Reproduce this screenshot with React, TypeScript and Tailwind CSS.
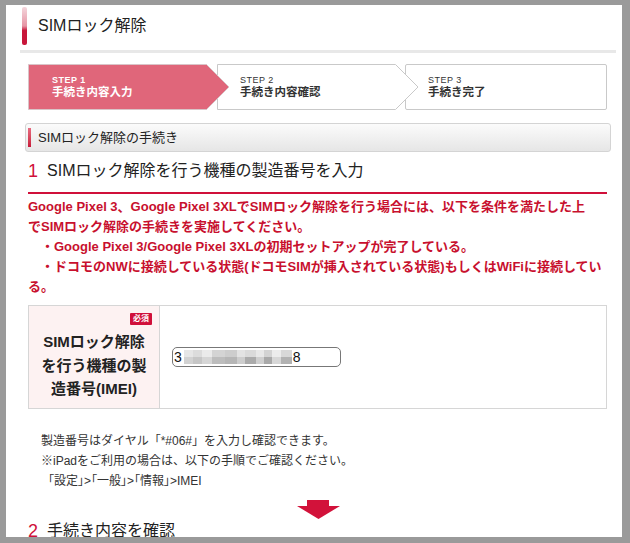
import React from "react";

const mosaic: [string, string, number][] = [
  ["#e6e6e6", "#d2d2d2", 9],
  ["#dcdcdc", "#c6c6c6", 9],
  ["#ebebeb", "#d6d6d6", 10],
  ["#d4d4d4", "#bdbdbd", 13],
  ["#cdcdcd", "#b6b6b6", 12],
  ["#e3e3e3", "#cdcdcd", 8],
  ["#dadada", "#ababab", 11],
  ["#e8e8e8", "#cfcfcf", 8],
  ["#d3d3d3", "#a9a9a9", 8],
  ["#ececec", "#d7d7d7", 9],
  ["#d8d8d8", "#b2b2b2", 11],
];

function StepArrow({ fill, stroke }: { fill: string; stroke: string }) {
  return (
    <svg
      className="absolute left-0 top-0 overflow-visible"
      width="202"
      height="46"
      viewBox="0 0 202 46"
    >
      <polygon
        points="0.5,0.5 178.5,0.5 201,23 178.5,45.5 0.5,45.5"
        fill={fill}
        stroke={stroke}
        strokeWidth="1"
      />
    </svg>
  );
}

export default function App() {
  return (
    <div className="h-[543px] w-full overflow-hidden bg-[#9a9a9a] pl-[6px] pr-[8px] pt-[5px] font-['Liberation_Sans','Noto_Sans_CJK_JP',sans-serif] text-[#222]">
      <div className="h-[532px] overflow-hidden bg-white">
        {/* page title */}
        <div className="ml-[14px] mr-[6px] border-b-[3px] border-[#e8e8e8] pb-[5px] pt-[2px]">
          <div className="flex h-[38px] items-center">
            <span className="ml-[2px] h-full w-[5px] rounded-[2px] bg-[linear-gradient(to_bottom,#f4d6dc_0%,#e695a4_50%,#c8163a_62%,#c8163a_100%)]" />
            <h1 className="ml-[11px] text-[16px] leading-[20px]">SIMロック解除</h1>
          </div>
        </div>

        {/* steps */}
        <div className="ml-[22px] mt-[11px] flex h-[46px]">
          <div className="relative z-30 w-[179px]">
            <StepArrow fill="#e0667a" stroke="#d9c4c8" />
            <div className="relative pl-[24px] pt-[10px] text-white">
              <div className="text-[9px] font-bold leading-[12px] tracking-[0.5px]">STEP 1</div>
              <div className="text-[11.5px] font-bold leading-[13px]">手続き内容入力</div>
            </div>
          </div>
          <div className="relative z-20 ml-[10px] w-[178px]">
            <StepArrow fill="#ffffff" stroke="#c9c9c9" />
            <div className="relative pl-[23px] pt-[10px] text-[#333]">
              <div className="text-[9px] leading-[12px] tracking-[0.5px]">STEP 2</div>
              <div className="text-[11.5px] font-bold leading-[13px]">手続き内容確認</div>
            </div>
          </div>
          <div className="relative z-10 ml-[10px] w-[202px] rounded-[2px] border border-[#c9c9c9] bg-white">
            <div className="pl-[22px] pt-[9px] text-[#333]">
              <div className="text-[9px] leading-[12px] tracking-[0.5px]">STEP 3</div>
              <div className="text-[11.5px] font-bold leading-[13px]">手続き完了</div>
            </div>
          </div>
        </div>

        {/* section header */}
        <div className="ml-[19px] mr-[11px] mt-[13px] flex h-[29px] items-center rounded-[3px] border border-[#d4d4d4] bg-gradient-to-b from-[#fbfbfb] to-[#e6e6e6]">
          <span className="ml-[2px] h-[19px] w-[3px] bg-gradient-to-b from-[#e66a80] to-[#c8163a]" />
          <span className="ml-[7px] text-[13px] leading-[16px]">SIMロック解除の手続き</span>
        </div>

        {/* heading 1 */}
        <div className="ml-[22px] mr-[15px] mt-[7px] flex items-center border-b-2 border-[#d0103a] pb-[9px] leading-[24px]">
          <span className="text-[18px] text-[#d0103a]">1</span>
          <span className="ml-[9px] text-[16px]">SIMロック解除を行う機種の製造番号を入力</span>
        </div>

        <div className="ml-[22px] mt-[3px] whitespace-nowrap text-[13px] font-bold leading-[20px] text-[#c8102e]">
          <div>Google Pixel 3、Google Pixel 3XLでSIMロック解除を行う場合には、以下を条件を満たした上</div>
          <div>でSIMロック解除の手続きを実施してください。</div>
          <div className="pl-[13px]">・Google Pixel 3/Google Pixel 3XLの初期セットアップが完了している。</div>
          <div className="pl-[13px]">・ドコモのNWに接続している状態(ドコモSIMが挿入されている状態)もしくはWiFiに接続してい</div>
          <div>る。</div>
        </div>

        {/* IMEI table */}
        <div className="ml-[22px] mr-[15px] mt-[8px] flex h-[104px] border border-[#d6d6d6]">
          <div className="flex w-[131px] flex-col items-center border-r border-[#d6d6d6] bg-[#fdf2f2] pt-[7px]">
            <span className="mr-[7px] self-end rounded-[1px] bg-[#d0103a] px-[3px] text-[8px] font-bold leading-[12px] text-white">
              必須
            </span>
            <div className="mt-[5px] text-center text-[15px] font-bold leading-[23.5px]">
              SIMロック解除
              <br />
              を行う機種の製
              <br />
              造番号(IMEI)
            </div>
          </div>
          <div className="flex flex-1 items-center pl-[12px]">
            <div className="flex h-[20px] w-[169px] items-center rounded-[5px] border border-[#777] text-[14px] text-[#111]">
              <span className="ml-[1px]">3</span>
              <div className="ml-[2px] flex h-[14px]">
                {mosaic.map(([top, bottom, w], i) => (
                  <div key={i} className="flex flex-col" style={{ width: w }}>
                    <div className="flex-1" style={{ background: top }} />
                    <div className="flex-1" style={{ background: bottom }} />
                  </div>
                ))}
              </div>
              <span className="ml-[1px]">8</span>
            </div>
          </div>
        </div>

        {/* notes */}
        <div className="ml-[35px] mt-[22px] whitespace-nowrap text-[12px] leading-[20px] text-[#333]">
          <div>製造番号はダイヤル「*#06#」を入力し確認できます。</div>
          <div>※iPadをご利用の場合は、以下の手順でご確認ください。</div>
          <div className="pl-[7px] [font-feature-settings:'palt']">「設定」&gt;「一般」&gt;「情報」&gt;IMEI</div>
        </div>

        {/* arrow */}
        <div className="ml-[291px] mt-[9px] h-[19px]">
          <svg width="43" height="19" viewBox="0 0 43 19">
            <rect x="10" y="0" width="22" height="6" fill="#d2123a" />
            <polygon points="0,6 43,6 21.5,19" fill="#d2123a" />
          </svg>
        </div>

        {/* heading 2 */}
        <div className="ml-[22px] flex items-center leading-[24px]">
          <span className="text-[18px] text-[#d0103a]">2</span>
          <span className="ml-[9px] text-[16px]">手続き内容を確認</span>
        </div>
      </div>
    </div>
  );
}
